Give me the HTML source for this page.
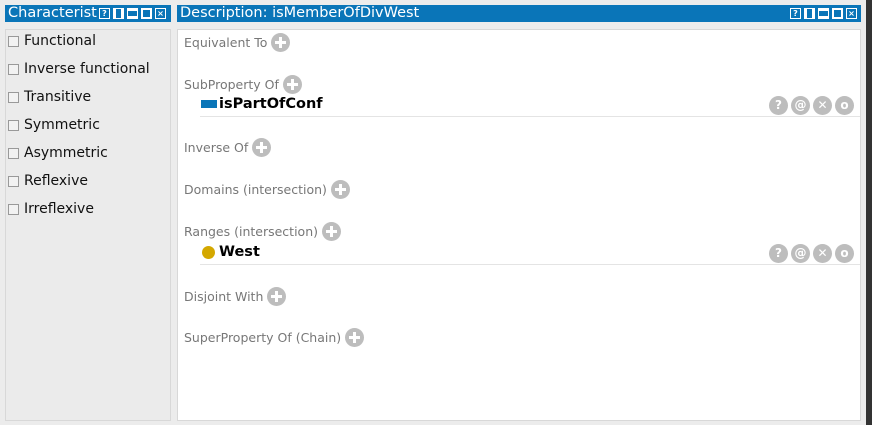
<!DOCTYPE html><html><head><style>
body{margin:0;width:872px;height:425px;background:#ececec;position:relative;overflow:hidden;font-family:"DejaVu Sans","Liberation Sans",sans-serif}
.a{position:absolute}
.bar{background:#0a75b8;color:#fff;font-size:14.5px;line-height:17px;height:17px;top:5px;overflow:hidden;white-space:nowrap}
.btn{position:absolute;top:8px;width:11px;height:11px;border:1px solid #fff;box-sizing:border-box;background:#0a75b8;color:#fff;font-size:8px;line-height:9px;text-align:center;font-weight:bold;overflow:hidden}
.cb{position:absolute;left:8px;width:11px;height:11px;border:1px solid #999;background:#f2f2f2;box-sizing:border-box}
.cl{position:absolute;left:24px;font-size:14px;color:#111}
.lbl{position:absolute;left:184px;font-size:12.5px;color:#777;white-space:nowrap}
.plus{display:inline-block;width:19px;height:19px;border-radius:50%;background:#bdbdbd;vertical-align:middle;position:relative;margin-left:4px;top:-1px}
.plus:before{content:"";position:absolute;left:4px;top:8px;width:11px;height:3px;background:#fff}
.plus:after{content:"";position:absolute;left:8px;top:4px;width:3px;height:11px;background:#fff}
.ic{position:absolute;width:19px;height:19px;border-radius:50%;background:#bdbdbd;color:#fff;font-weight:bold;font-size:12px;line-height:19px;text-align:center}
.item{position:absolute;left:219px;font-size:14.5px;font-weight:bold;color:#000}
.sep{position:absolute;left:200px;width:660px;height:1px;background:#e4e4e4}
</style></head><body>
<div class="a" style="right:0;top:0;width:6px;height:425px;background:#333"></div>
<div class="a bar" style="left:5px;width:166px"><span style="padding-left:3px">Characteristics</span></div>
<div class="a" style="left:97px;top:5px;width:74px;height:17px;background:#0a75b8"></div>
<div class="btn" style="left:99px">?</div><div class="btn" style="left:113px;border-width:1px 3px"></div><div class="btn" style="left:127px;border-width:3px 1px"></div><div class="btn" style="left:141px;border-width:2px"></div><div class="btn" style="left:155px">×</div>
<div class="a bar" style="left:177px;width:684px"><span style="padding-left:3px">Description: isMemberOfDivWest</span></div>
<div class="btn" style="left:790px">?</div><div class="btn" style="left:804px;border-width:1px 3px"></div><div class="btn" style="left:818px;border-width:3px 1px"></div><div class="btn" style="left:832px;border-width:2px"></div><div class="btn" style="left:846px">×</div>
<div class="a" style="left:5px;top:29px;width:164px;height:390px;background:#ebebeb;border:1px solid #d8d8d8"></div>
<div class="a" style="left:177px;top:29px;width:682px;height:390px;background:#fff;border:1px solid #d8d8d8"></div>
<div class="cb" style="top:36px"></div><div class="cl" style="top:33px">Functional</div>
<div class="cb" style="top:64px"></div><div class="cl" style="top:61px">Inverse functional</div>
<div class="cb" style="top:92px"></div><div class="cl" style="top:89px">Transitive</div>
<div class="cb" style="top:120px"></div><div class="cl" style="top:117px">Symmetric</div>
<div class="cb" style="top:148px"></div><div class="cl" style="top:145px">Asymmetric</div>
<div class="cb" style="top:176px"></div><div class="cl" style="top:173px">Reflexive</div>
<div class="cb" style="top:204px"></div><div class="cl" style="top:201px">Irreflexive</div>
<div class="lbl" style="top:34px">Equivalent To<span class="plus"></span></div>
<div class="lbl" style="top:76px">SubProperty Of<span class="plus"></span></div>
<div class="a" style="left:201px;top:100px;width:16px;height:8px;background:#0a75b8"></div>
<div class="item" style="top:96px">isPartOfConf</div>
<div class="sep" style="top:116px"></div>
<div class="lbl" style="top:139px">Inverse Of<span class="plus"></span></div>
<div class="lbl" style="top:181px">Domains (intersection)<span class="plus"></span></div>
<div class="lbl" style="top:223px">Ranges (intersection)<span class="plus"></span></div>
<div class="a" style="left:202px;top:246px;width:13px;height:13px;border-radius:50%;background:#d4a800"></div>
<div class="item" style="top:244px">West</div>
<div class="sep" style="top:264px"></div>
<div class="lbl" style="top:288px">Disjoint With<span class="plus"></span></div>
<div class="lbl" style="top:329px">SuperProperty Of (Chain)<span class="plus"></span></div>
<div class="ic" style="left:769px;top:96px">?</div><div class="ic" style="left:791px;top:96px">@</div><div class="ic" style="left:813px;top:96px">✕</div><div class="ic" style="left:835px;top:96px">o</div>
<div class="ic" style="left:769px;top:244px">?</div><div class="ic" style="left:791px;top:244px">@</div><div class="ic" style="left:813px;top:244px">✕</div><div class="ic" style="left:835px;top:244px">o</div>
</body></html>
